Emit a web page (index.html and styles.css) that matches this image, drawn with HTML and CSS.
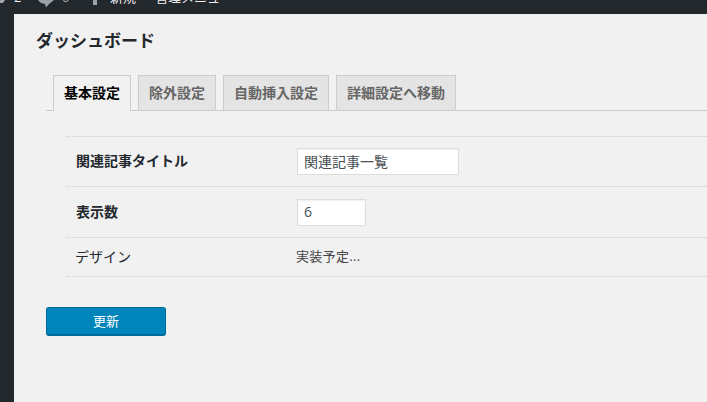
FILE: index.html
```html
<!DOCTYPE html>
<html lang="ja">
<head>
<meta charset="utf-8">
<title>ダッシュボード</title>
<link rel="stylesheet" href="styles.css">
</head>
<body>
<header class="adminbar">
  <span class="bar-item bar-updates">
    <svg width="6" height="4" viewBox="0 0 6 4"><path d="M0 3 L3 3 L5 0 L0 0 Z" fill="#9ea3a8"/></svg>
    <span>2</span>
  </span>
  <span class="bar-item bar-comments">
    <svg width="16" height="8" viewBox="0 0 16 8"><path d="M0 0 H16 L11 4 L8 7.5 L7 4 L3 3 Z" fill="#9ea3a8"/></svg>
    <span class="dim">0</span>
  </span>
  <span class="bar-item bar-new">
    <svg width="6" height="6" viewBox="0 0 6 6"><path d="M1 0 H5 V5 H1 Z" fill="#9ea3a8"/></svg>
    <span>新規</span>
  </span>
  <span class="bar-item"><span>管理メニュー</span></span>
</header>
<div class="shell">
  <aside class="sidemenu"></aside>
  <main class="content">
    <h1 class="title">ダッシュボード</h1>
    <nav class="tabs">
      <a class="tab tab-active">基本設定</a>
      <a class="tab">除外設定</a>
      <a class="tab">自動挿入設定</a>
      <a class="tab">詳細設定へ移動</a>
    </nav>
    <div class="form">
      <div class="row row-title">
        <label class="label label-bold">関連記事タイトル</label>
        <input class="field field-wide" type="text" value="関連記事一覧">
      </div>
      <div class="row row-count">
        <label class="label label-bold">表示数</label>
        <input class="field field-small" type="text" value="6">
      </div>
      <div class="row row-design">
        <span class="label">デザイン</span>
        <span class="value">実装予定...</span>
      </div>
    </div>
    <button class="submit" type="button">更新</button>
  </main>
</div>
</body>
</html>
```
FILE: styles.css
```css
* { box-sizing: border-box; }
html, body { margin: 0; padding: 0; height: 100%; overflow: hidden; }
body {
  background: #f1f1f1;
  color: #23282d;
  font-family: "Open Sans", "Noto Sans CJK JP", sans-serif;
  font-size: 13px;
}
.adminbar {
  height: 14px;
  background: #23282d;
  display: flex;
  align-items: flex-start;
  overflow: hidden;
  color: #eee;
  font-size: 13px;
  line-height: 13px;
}
.bar-item { display: flex; align-items: flex-start; height: 14px; margin-top: -9px; }
.bar-item svg { margin-top: 9px; flex: none; }
.dim { color: #9ea3a8; }
.bar-updates { width: 38px; gap: 8px; }
.bar-comments { width: 54px; gap: 8px; }
.bar-new { width: 63px; gap: 12px; }
.shell { display: flex; height: 388px; }
.sidemenu { width: 14px; background: #23282d; flex: none; }
.content { flex: 1; min-width: 0; padding-left: 22px; }
.title {
  margin: 14px 0 0;
  font-size: 17px;
  line-height: 26px;
  font-weight: 600;
  color: #23282d;
}
.tabs {
  margin-top: 21px;
  margin-left: 10px;
  height: 36px;
  padding-left: 7px;
  border-bottom: 1px solid #ccc;
  display: flex;
  gap: 7px;
  align-items: flex-end;
}
.tab {
  height: 35px;
  padding: 0 10px;
  border: 1px solid #ccc;
  border-bottom: 0;
  background: #e4e4e4;
  color: #666;
  font-size: 14px;
  font-weight: 600;
  line-height: 33px;
}
.tab-active {
  height: 36px;
  margin-bottom: -1px;
  background: #f1f1f1;
  color: #000;
}
.form { margin: 25px 0 0 30px; border-top: 1px dotted #ccc; }
.row { display: flex; align-items: center; border-bottom: 1px dotted #ccc; padding-left: 10px; }
.row-title { height: 50px; }
.row-count { height: 51px; }
.row-design { height: 39px; }
.label { width: 221px; flex: none; font-size: 14px; color: #23282d; margin-bottom: 3px; }
.label-bold { font-weight: 600; }
.row-design .label { margin-left: -1px; }
.value { font-size: 13px; letter-spacing: 0.3px; color: #444; margin-bottom: 3px; }
.field {
  height: 27px;
  border: 1px solid #ddd;
  background: #fff;
  color: #4a4f54;
  font: 14px "Open Sans", "Noto Sans CJK JP", sans-serif;
  padding: 0 6px 2px;
  outline: 0;
  box-shadow: inset 0 1px 2px rgba(0,0,0,.07);
}
.field-wide { width: 162px; }
.field-small { width: 69px; }
.submit {
  display: block;
  margin: 30px 0 0 10px;
  width: 120px;
  height: 29px;
  border: 1px solid #006799;
  border-bottom-width: 2px;
  border-radius: 3px;
  background: #0085ba;
  color: #fff;
  font: 13px "Open Sans", "Noto Sans CJK JP", sans-serif;
  padding: 0 0 2px;
}
```
